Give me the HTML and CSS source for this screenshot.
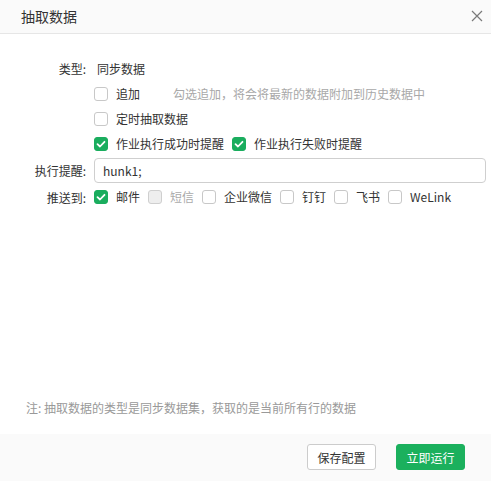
FILE: index.html
```html
<!DOCTYPE html>
<html>
<head>
<meta charset="utf-8">
<link rel="stylesheet" href="styles.css">
</head>
<body>
<div class="dialog">
  <div class="header">
    <span class="title">抽取数据</span>
    <svg class="close" width="12" height="12" viewBox="0 0 12 12"><path d="M1 1 L11 11 M11 1 L1 11" stroke="#7a7a7a" stroke-width="1.2" fill="none"/></svg>
  </div>
  <div class="body">
    <div class="row r-type">
      <div class="label">类型:</div>
      <div class="value type-val">同步数据</div>
    </div>
    <div class="row r-check">
      <div class="label"></div>
      <div class="value">
        <span class="cb"></span><span class="txt">追加</span><span class="hint">勾选追加，将会将最新的数据附加到历史数据中</span>
      </div>
    </div>
    <div class="row r-check">
      <div class="label"></div>
      <div class="value"><span class="cb"></span><span class="txt">定时抽取数据</span></div>
    </div>
    <div class="row r-check">
      <div class="label"></div>
      <div class="value">
        <span class="cb on"><svg viewBox="0 0 14 14" width="14" height="14"><path d="M3.5 7.2 L6 9.5 L10.5 4.8" stroke="#fff" stroke-width="1.8" fill="none" stroke-linecap="round" stroke-linejoin="round"/></svg></span><span class="txt">作业执行成功时提醒</span>
        <span class="cb on"><svg viewBox="0 0 14 14" width="14" height="14"><path d="M3.5 7.2 L6 9.5 L10.5 4.8" stroke="#fff" stroke-width="1.8" fill="none" stroke-linecap="round" stroke-linejoin="round"/></svg></span><span class="txt">作业执行失败时提醒</span>
      </div>
    </div>
    <div class="row r-input">
      <div class="label">执行提醒:</div>
      <div class="value"><div class="input">hunk1;</div></div>
    </div>
    <div class="row r-push">
      <div class="label">推送到:</div>
      <div class="value">
        <span class="cb on"><svg viewBox="0 0 14 14" width="14" height="14"><path d="M3.5 7.2 L6 9.5 L10.5 4.8" stroke="#fff" stroke-width="1.8" fill="none" stroke-linecap="round" stroke-linejoin="round"/></svg></span><span class="txt">邮件</span>
        <span class="cb dis"></span><span class="txt muted">短信</span>
        <span class="cb"></span><span class="txt">企业微信</span>
        <span class="cb"></span><span class="txt">钉钉</span>
        <span class="cb"></span><span class="txt">飞书</span>
        <span class="cb"></span><span class="txt">WeLink</span>
      </div>
    </div>
  </div>
  <div class="note">注: 抽取数据的类型是同步数据集，获取的是当前所有行的数据</div>
  <div class="footer">
    <button class="btn">保存配置</button>
    <button class="btn primary">立即运行</button>
  </div>
</div>
</body>
</html>
```
FILE: styles.css
```css
* { box-sizing: border-box; }
html, body { margin: 0; padding: 0; background: #fff; }
body {
  font-family: "Noto Sans CJK SC", "Noto Sans", sans-serif;
  font-size: 12px;
  color: #333;
}
.dialog {
  width: 491px;
  height: 481px;
  display: flex;
  flex-direction: column;
}
.header {
  height: 34px;
  background: #fafafa;
  border-bottom: 1px solid #e6e6e6;
  display: flex;
  align-items: center;
  justify-content: space-between;
  padding: 0 7px 0 21px;
  flex: none;
}
.title { font-size: 14px; color: #333; line-height: 20px; margin-top: -2px; }
.close { margin-top: -1px; margin-right: 1px; }
.body {
  flex: 1;
  padding-top: 24px;
}
.row { display: flex; align-items: center; }
.label {
  width: 86px;
  text-align: right;
  color: #333;
  flex: none;
}
.value {
  margin-left: 8px;
  display: flex;
  align-items: center;
  flex: 1;
  padding-right: 5px;
}
.r-type { height: 20px; }
.type-val { padding-left: 3px; }
.r-check { height: 25px; }
.r-type + .r-check { margin-top: 3px; }
.cb {
  width: 14px;
  height: 14px;
  border: 1px solid #c8c8c8;
  border-radius: 3px;
  background: #fff;
  flex: none;
  display: inline-flex;
}
.cb.on { background: #1aad5e; border-color: #1aad5e; }
.cb.on svg { margin: -1px; }
.cb.dis { background: #eeeeee; border-color: #cfcfcf; }
.txt { margin-left: 8px; margin-right: 8px; line-height: 18px; }
.muted { color: #aaa; }
.hint { margin-left: 25px; color: #a8a8a8; }
.r-input { margin-top: 2px; height: 25px; }
.input {
  flex: 1;
  height: 25px;
  border: 1px solid #cfcfcf;
  border-radius: 4px;
  padding: 0 8px;
  line-height: 23px;
  color: #333;
}
.r-push { height: 26px; margin-top: 1px; }
.note {
  padding-left: 26px;
  color: #999;
  height: 35px;
  line-height: 18px;
  flex: none;
}
.footer {
  height: 47px;
  background: #fafafa;
  display: flex;
  justify-content: flex-end;
  align-items: center;
  padding-right: 26px;
  gap: 20px;
  flex: none;
}
.btn {
  width: 69px;
  height: 26px;
  border: 1px solid #cccccc;
  border-radius: 3px;
  background: #fff;
  color: #333;
  font-family: "Noto Sans CJK SC", sans-serif;
  font-size: 12px;
  padding: 0;
  margin-top: -1px;
}
.btn.primary { background: #1bb05d; border-color: #1bb05d; color: #fff; }
```
